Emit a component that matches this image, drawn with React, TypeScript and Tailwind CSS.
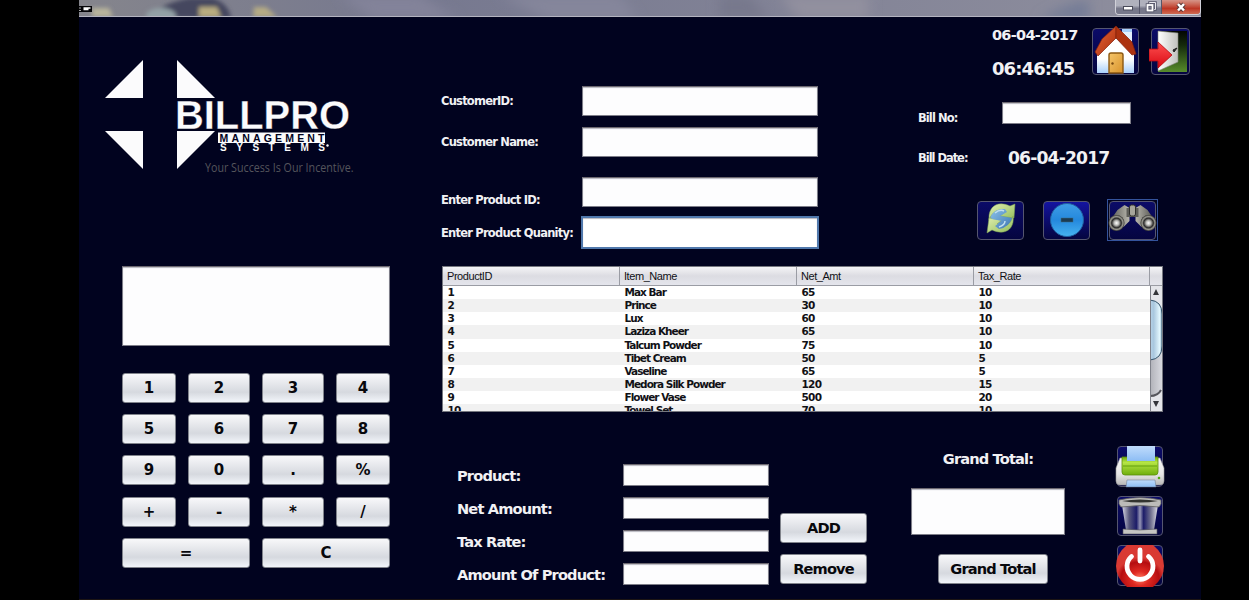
import type { ReactNode } from "react";

const field = "bg-[#fdfdfe] border border-[#7d7d88] border-t-[#6c6870] shadow-[inset_0_1px_1px_#b9b9c0]";
const key =
  "flex items-center justify-center rounded-[3px] border border-[#80838b] bg-linear-to-b from-[#f8f8fa] via-[#d6d9df] via-65% to-[#f2f5fa] text-[#08080c] font-bold leading-none pt-px";
const iconBox = "flex items-center justify-center rounded-[4px] border border-[#55566f] bg-linear-to-b from-[#0b0b68] to-[#050540]";

const keys = ["1", "2", "3", "4", "5", "6", "7", "8", "9", "0", ".", "%", "+", "-", "*", "/"];

const rows = [
  ["1", "Max Bar", "65", "10"],
  ["2", "Prince", "30", "10"],
  ["3", "Lux", "60", "10"],
  ["4", "Laziza Kheer", "65", "10"],
  ["5", "Talcum Powder", "75", "10"],
  ["6", "Tibet Cream", "50", "5"],
  ["7", "Vaseline", "65", "5"],
  ["8", "Medora Silk Powder", "120", "15"],
  ["9", "Flower Vase", "500", "20"],
  ["10", "Towel Set", "70", "10"],
];

function TitleBar() {
  return (
    <div className="flex h-[17px] justify-between overflow-hidden border-b border-[#b4b4c0] bg-linear-to-r from-[#85858c] via-[#76788f] via-30% to-[#8f8f9e]">
      <svg width="1030" height="16" viewBox="0 0 1030 16">
        <defs>
          <filter id="haze" x="-10%" y="-50%" width="120%" height="200%"><feGaussianBlur stdDeviation="2.200" /></filter>
          <filter id="soft" x="-10%" y="-50%" width="120%" height="200%"><feGaussianBlur stdDeviation="6" /></filter>
        </defs>
        <g filter="url(#soft)">
          <path d="M260 -5h80l40 25h-85z" fill="#83839a" />
          <path d="M420 -5h120l20 25H470z" fill="#85869b" />
          <path d="M640 -5h30l20 25h-50z" fill="#77788c" />
          <path d="M700 -5h90v25h-70z" fill="#92909f" />
          <path d="M960 20q20-14 50-20v20z" fill="#737c96" />
        </g>
        <g filter="url(#haze)">
          <path d="M70 18q10-14 40-20h24q16 6 18 20z" fill="#45465e" />
          <path d="M13 8h17l4 9H13z" fill="#b9b59c" />
          <ellipse cx="82" cy="16" rx="15" ry="8" fill="#93a1a6" />
          <path d="M120 7h18l4 10h-22z" fill="#b9ad80" />
          <path d="M175 7h12l11 10h-24z" fill="#b5ab84" />
        </g>
        <rect x="0" y="6" width="13" height="6" fill="#050508" />
        <path d="M1 7.500v1M1 10v1M4.500 8h7M4.500 9.500h5" stroke="#fff" strokeWidth="1.300" />
      </svg>
      <div className="flex h-[15px] w-[86px] shrink-0 overflow-hidden rounded-b-[4px] border border-t-0 border-[#d0d0d8]">
        <div className="flex w-[24px] items-center justify-center border-r border-[#55566a] bg-linear-to-b from-[#b0b1bd] from-40% to-[#77788a] to-60%">
          <svg width="12" height="12"><rect x="1.500" y="5.500" width="9" height="3.500" fill="#fff" stroke="#4a4b5a" /></svg>
        </div>
        <div className="flex w-[22px] items-center justify-center border-r border-[#55566a] bg-linear-to-b from-[#b0b1bd] from-40% to-[#77788a] to-60%">
          <svg width="12" height="12" fill="none"><path d="M4.500 4V1.500h6v7H9" stroke="#55566a" strokeWidth="2.500" /><path d="M4.500 4V1.500h6v7H9" stroke="#e8e8ee" strokeWidth="1" /><rect x="2.500" y="4" width="5" height="5.500" stroke="#55566a" strokeWidth="3.500" /><rect x="2.500" y="4" width="5" height="5.500" stroke="#fff" strokeWidth="1.800" /></svg>
        </div>
        <div className="flex flex-1 items-center justify-center bg-linear-to-b from-[#d59488] via-[#bd3524] via-60% to-[#cf6a52]">
          <svg width="12" height="12"><path d="M3 3l6 6.500M9 3L3 9.500" stroke="#5c3a3a" strokeWidth="4.500" /><path d="M3 3l6 6.500M9 3L3 9.500" stroke="#fff" strokeWidth="2.500" /></svg>
        </div>
      </div>
    </div>
  );
}

function Logo() {
  return (
    <svg className="block" width="256" height="120" viewBox="0 0 256 120" fill="#fbfbfc">
      <path d="M38 0v38H0zM72 0v38h38zM0 71h38v38zM72 71h38L72 109z" />
      <text x="70" y="69" fontFamily="Liberation Sans" fontWeight="700" fontSize="41" textLength="175" lengthAdjust="spacingAndGlyphs" stroke="#01031f" strokeWidth=".3">BILLPRO</text>
      <rect x="113" y="72.500" width="107" height="10.500" />
      <text x="114.500" y="81.500" fill="#02031f" fontFamily="Liberation Sans" fontWeight="700" fontSize="10.500" textLength="105">MANAGEMENT</text>
      <text x="115" y="91" fontFamily="Liberation Sans" fontWeight="700" fontSize="10" textLength="105">SYSTEMS</text>
      <circle cx="222.500" cy="85.500" r="1.200" />
      <text x="100" y="111.500" fill="#55555c" fontFamily="Open Sans" fontWeight="400" fontSize="12" textLength="148.500" lengthAdjust="spacingAndGlyphs">Your Success Is Our Incentive.</text>
    </svg>
  );
}

function HomeIcon() {
  return (
    <svg width="46" height="50" viewBox="0 0 46 50">
      <defs>
        <linearGradient id="wall" x2="0" y2="1"><stop stopColor="#fff" /><stop offset=".6" stopColor="#fff" /><stop offset="1" stopColor="#a9d0fb" /></linearGradient>
        <linearGradient id="roof" x2="1" y2="1"><stop stopColor="#e8683a" /><stop offset="1" stopColor="#a92c0c" /></linearGradient>
        <linearGradient id="wood" x2="1" y2="1"><stop stopColor="#f5c56a" /><stop offset="1" stopColor="#d8932c" /></linearGradient>
      </defs>
      <path d="M29 4h10v19l-10-8z" fill="#e4f0fd" /><path d="M29 4h10v3H29z" fill="#a8d0fa" />
      <path d="M23 13L41 29v19H4V29z" fill="url(#wall)" />
      <path d="M23 1L9 14 2 27l3 4 18-18z" fill="url(#roof)" stroke="#84200a" strokeWidth=".7" />
      <path d="M23 1l16 16 4 12-4 1-16-17z" fill="#ad3210" stroke="#84200a" strokeWidth=".7" />
      <path d="M16 48V30q0-2 2-2h10q2 0 2 2v18z" fill="url(#wood)" stroke="#8c5812" strokeWidth="1.400" />
      <circle cx="19.500" cy="38.500" r="1.200" fill="#7a4a10" />
    </svg>
  );
}

function ExitIcon() {
  return (
    <svg className="block" width="40" height="46" viewBox="0 0 40 46">
      <defs>
        <linearGradient id="out" x2="0" y2="1"><stop stopColor="#030603" /><stop offset=".35" stopColor="#152a0c" /><stop offset="1" stopColor="#578c2b" /></linearGradient>
        <linearGradient id="leaf" x2="1"><stop stopColor="#fff" /><stop offset="1" stopColor="#bfc1bd" /></linearGradient>
        <linearGradient id="arr" x2="0" y2="1"><stop stopColor="#ff5252" /><stop offset="1" stopColor="#d90812" /></linearGradient>
      </defs>
      <path d="M9 2h29v41H9z" fill="url(#out)" />
      <path d="M9 2l20 2v29L9 42z" fill="url(#leaf)" stroke="#83867e" strokeWidth=".6" />
      <path d="M24 21l4-2-3 4z" fill="#222" stroke="#222" />
      <path d="M0 20h9v-7l14 13L9 39v-7H0z" fill="url(#arr)" stroke="#b3060e" strokeWidth=".8" />
    </svg>
  );
}

function RefreshIcon() {
  return (
    <svg className="-mt-[4px]" width="34" height="34" viewBox="0 0 34 34">
      <defs><linearGradient id="gr" x2="1" y2="1"><stop stopColor="#e2efb0" /><stop offset="1" stopColor="#91bd5c" /></linearGradient>
      <linearGradient id="bl" x2="1" y2="1"><stop stopColor="#8bc1e8" /><stop offset="1" stopColor="#3f78b4" /></linearGradient></defs>
      <circle cx="17" cy="17" r="12" fill="url(#bl)" />
      <path d="M5 19C4 6 13-1 26 5l5-2-1 14-14-2 5-4C14 7 8 11 5 19z" fill="url(#gr)" stroke="#7ca24e" strokeWidth=".5" />
      <path d="M29 15C31 28 21 35 8 29l-5 3 2-15 13 2-5 4c8 5 14 0 16-8z" fill="url(#gr)" stroke="#7ca24e" strokeWidth=".5" />
      <path d="M7 15q4-8 14-7l2 3-7 4 11 2q-1 9-12 11l-4-3 7-5-10-2z" fill="url(#bl)" />
      <path d="M11 12q5-4 9-2M21 20q0 4-6 6" fill="none" stroke="#c4e0ee" strokeWidth="1.500" />
    </svg>
  );
}

function MinusIcon() {
  return (
    <svg width="36" height="36" viewBox="0 0 36 36">
      <defs><linearGradient id="disc" x2="0" y2="1"><stop stopColor="#3f9de5" /><stop offset=".5" stopColor="#2488dd" /><stop offset="1" stopColor="#46b3f0" /></linearGradient></defs>
      <circle cx="18" cy="18" r="16.500" fill="url(#disc)" stroke="#20609f" />
      <rect x="12" y="16" width="12" height="4" fill="#1b3b52" stroke="#3c6d85" strokeWidth=".5" />
    </svg>
  );
}

function BinocularsIcon() {
  return (
    <svg className="-mt-[5px] shrink-0" width="49" height="34" viewBox="0 0 48 34">
      <defs>
        <linearGradient id="tube" x2="1"><stop stopColor="#4d4d49" /><stop offset=".5" stopColor="#c9c7bc" /><stop offset="1" stopColor="#40403d" /></linearGradient>
        <radialGradient id="lens"><stop stopColor="#fff" /><stop offset=".3" stopColor="#b9b9b5" /><stop offset=".6" stopColor="#292928" /><stop offset=".8" stopColor="#9c9b93" /><stop offset="1" stopColor="#33332f" /></radialGradient>
      </defs>
      <path d="M9 9l7-5 5 3v13l-6 6L0 22zM39 9l-7-5-5 3v13l6 6 15-4z" fill="url(#tube)" />
      <path d="M18 7h12v9H18z" fill="#5d5d58" /><rect x="21" y="4" width="6" height="11" rx="2" fill="#a6a59b" stroke="#30302d" />
      <circle cx="8" cy="22" r="8" fill="url(#lens)" /><circle cx="40" cy="22" r="8" fill="url(#lens)" />
    </svg>
  );
}

function PrinterIcon() {
  return (
    <svg className="block" width="50" height="42" viewBox="0 0 50 42">
      <defs>
        <linearGradient id="case" x2="0" y2="1"><stop stopColor="#f8f8f8" /><stop offset=".6" stopColor="#e6e6e6" /><stop offset="1" stopColor="#b8b8b8" /></linearGradient>
        <linearGradient id="lid" x2="0" y2="1"><stop stopColor="#6ca60f" /><stop offset=".3" stopColor="#b6e645" /><stop offset="1" stopColor="#6fae0c" /></linearGradient>
        <linearGradient id="paper" x2="0" y2="1"><stop stopColor="#c0dcfc" /><stop offset="1" stopColor="#8dbdf4" /></linearGradient>
      </defs>
      <path d="M5 12h40l4 10v13q0 4-4 4H5q-4 0-4-4V22z" fill="url(#case)" stroke="#9a9a9a" strokeWidth=".6" />
      <path d="M7 11h36v15q0 3-3 3H10q-3 0-3-3z" fill="url(#lid)" stroke="#5a8e0b" strokeWidth=".8" />
      <path d="M8 20h34" stroke="#639f0c" /><rect x="12" y="0" width="28" height="15" fill="url(#paper)" />
      <circle cx="44" cy="32" r="1.300" fill="#55a915" />
      <path d="M12 34h28l1 7H11z" fill="url(#paper)" stroke="#6b7788" strokeWidth=".5" />
    </svg>
  );
}

function TrashIcon() {
  return (
    <svg className="block" width="44" height="38" viewBox="0 0 44 38">
      <defs><linearGradient id="glass" x2="1"><stop stopColor="#d9d9e6" /><stop offset=".2" stopColor="#56567c" /><stop offset=".4" stopColor="#1c1c68" /><stop offset=".5" stopColor="#9797b6" /><stop offset=".6" stopColor="#1c1c68" /><stop offset=".8" stopColor="#70708f" /><stop offset="1" stopColor="#dedee6" /></linearGradient></defs>
      <path d="M4 8h36l-4 25H8z" fill="url(#glass)" />
      <path d="M1 3q21-5 42 0v4l-2 3q-19-3-38 0L1 7z" fill="#bcbcb9" stroke="#62625f" strokeWidth=".8" />
      <path d="M4 4q18-3 36 0-18 3-36 0" fill="#32332f" />
      <path d="M5 32q17 2 34 0v5H5z" fill="#c5c5c3" stroke="#55555a" strokeWidth=".6" />
    </svg>
  );
}

function PowerIcon() {
  return (
    <svg className="block" width="50" height="42" viewBox="0 0 50 42">
      <defs><radialGradient id="red" cy=".8"><stop stopColor="#ff7b62" /><stop offset=".35" stopColor="#e02a22" /><stop offset=".8" stopColor="#b50d10" /><stop offset="1" stopColor="#d93a33" /></radialGradient></defs>
      <path d="M12 0h26q11 9 11 21T38 42H12Q1 33 1 21T12 0z" fill="url(#red)" />
      <path d="M16.500 11.500a13 13 0 1 0 17 0M25 5v11" stroke="#fff" strokeWidth="4.800" strokeLinecap="round" fill="none" />
    </svg>
  );
}

function FormRow({ label, className, input }: { label: ReactNode; className: string; input: string }) {
  return (
    <div className={`flex justify-between ${className}`}>
      <span className="text-[11.500px] leading-[14px] tracking-[-0.068em]">{label}</span>
      <div className={`shrink-0 ${input}`} />
    </div>
  );
}

function Calculator() {
  return (
    <div className="ml-[43px] w-[268px]">
      <div className={`h-[80px] ${field}`} />
      <div className="mt-[27px] grid grid-cols-[54px_62px_62px_54px] gap-x-3 gap-y-[11.200px] text-[15px]">
        {keys.map((k) => (
          <div key={k} className={`h-[30px] ${key}`}>{k}</div>
        ))}
        <div className={`col-span-2 h-[30px] ${key}`}>=</div>
        <div className={`col-span-2 h-[30px] ${key}`}>C</div>
      </div>
    </div>
  );
}

function ProductTable() {
  const cols = "grid grid-cols-[177px_177px_177px_176px]";
  return (
    <div className="flex h-[146px] w-[721px] flex-col overflow-hidden border border-[#75777f] bg-white text-[#111116]">
      <div className="flex h-[19px] shrink-0 border-b border-[#9a9ca4] bg-linear-to-b from-[#f4f4f6] via-[#dcdce2] to-[#e4e5ec] font-['Liberation_Sans'] text-[11px] font-normal leading-[19px] tracking-[-0.04em]">
        <div className={cols}>
          {["ProductID", "Item_Name", "Net_Amt", "Tax_Rate"].map((h) => (
            <div key={h} className="border-r border-[#9a9ca4] pl-1">{h}</div>
          ))}
        </div>
      </div>
      <div className="flex min-h-0 flex-1">
        <div className="w-[707px] overflow-hidden text-[10.500px] leading-[13.150px]">
          {rows.map((r) => (
            <div key={r[0]} className={`${cols} h-[13.150px] even:bg-[#f1f1f1]`}>
              {r.map((c, i) => (
                <span key={i} className={`pl-[4.500px] ${i === 1 ? "tracking-[-0.094em]" : "tracking-[-0.07em]"}`}>{c}</span>
              ))}
            </div>
          ))}
        </div>
        <svg width="12" height="125" viewBox="0 0 12 125">
          <defs>
            <linearGradient id="track" x2="1"><stop stopColor="#b0b1b8" /><stop offset="1" stopColor="#d8d9df" /></linearGradient>
            <linearGradient id="thumb" x2="1"><stop stopColor="#b7d3e8" /><stop offset=".3" stopColor="#a9c7de" /><stop offset=".8" stopColor="#e2f6fd" /><stop offset="1" stopColor="#9cbdd0" /></linearGradient>
          </defs>
          <rect width="12" height="125" fill="url(#track)" />
          <path d="M0 0h12v26Q12 15 0 14zM0 110q8 0 12-8v23H0z" fill="#e4e5ea" />
          <path d="M0 110q8 0 11-6" stroke="#55555c" strokeWidth="2" fill="none" />
          <path d="M0 14Q12 15 12 28v32q0 13-12 14z" fill="url(#thumb)" stroke="#34536a" />
          <path d="M3 9l3-6 3 6zM3 115h6l-3 6z" fill="#33343a" />
          <path d="M.5 0v125" stroke="#80828b" />
        </svg>
      </div>
    </div>
  );
}

function BillPanel() {
  return (
    <div className="ml-[100px] w-[284px] shrink-0">
      <div className="flex h-[64px] pl-[74px] pt-[11px]">
        <div className="w-[100px] shrink-0 leading-none">
          <div className="text-[14.500px] leading-[15px] tracking-[-0.05em]">06-04-2017</div>
          <div className="mt-[16px] text-[18px] leading-[20px] tracking-[-0.05em]">06:46:45</div>
        </div>
        <div className={`h-[47px] w-[47px] shrink-0 ${iconBox}`}><div className="-mt-[4px]"><HomeIcon /></div></div>
        <div className={`ml-[12px] h-[47px] w-[39px] shrink-0 ${iconBox}`}><div className="-ml-[3px] shrink-0"><ExitIcon /></div></div>
      </div>
      <div className="mt-[20px] flex h-[24px] text-[11.500px] leading-[14px] tracking-[-0.08em]">
        <span className="w-[84px] pt-[10px]">Bill No:</span>
        <div className={`mt-px h-[22px] w-[129px] ${field}`} />
      </div>
      <div className="mt-[23px] flex h-[20px] items-center">
        <span className="w-[90px] pt-[2px] text-[11.500px] tracking-[-0.09em]">Bill Date:</span>
        <span className="text-[17.200px] leading-[20px] tracking-[-0.05em]">06-04-2017</span>
      </div>
      <div className="mt-[31px] flex h-[42px] items-center pl-[59px]">
        <div className={`h-[39px] w-[47px] ${iconBox}`}><RefreshIcon /></div>
        <div className={`ml-[19px] h-[39px] w-[47px] ${iconBox} from-[#1414a0] to-[#0d0d7c]`}><MinusIcon /></div>
        <div className="ml-[17px] flex h-[42px] w-[51px] items-center justify-center border border-[#34539c]">
          <div className={`h-[39px] w-[47px] ${iconBox}`}><BinocularsIcon /></div>
        </div>
      </div>
    </div>
  );
}

function Totals() {
  return (
    <div className="flex h-[144px] pl-[16px] text-[14.600px] tracking-[-0.058em]">
      <div className="flex w-[312px] flex-col gap-[11px] pt-[19px]">
        {["Product:", "Net Amount:", "Tax Rate:", "Amount Of Product:"].map((l) => (
          <div key={l} className="flex h-[22px] items-center justify-between">
            <span className="pt-px">{l}</span>
            <div className={`h-[22px] w-[146px] ${field}`} />
          </div>
        ))}
      </div>
      <div className="ml-[11px] flex w-[87px] flex-col gap-[11px] pt-[68px]">
        <div className={`h-[30px] ${key}`}>ADD</div>
        <div className={`h-[30px] ${key}`}>Remove</div>
      </div>
      <div className="ml-[44px] flex w-[154px] flex-col items-center pt-[5px]">
        <span className="leading-[18px]">Grand Total:</span>
        <div className={`mt-[20px] h-[47px] w-full ${field}`} />
        <div className={`mt-[19px] ml-[10px] h-[30px] w-[110px] ${key}`}>Grand Total</div>
      </div>
      <div className="ml-[52px] flex w-[46px] flex-col gap-[9px] pt-px">
        <div className={`h-[41px] w-[46px] ${iconBox}`}><div className="-mx-[3px] shrink-0"><PrinterIcon /></div></div>
        <div className={`h-[40px] w-[46px] ${iconBox}`}><TrashIcon /></div>
        <div className={`h-[41px] w-[46px] ${iconBox}`}><div className="-mx-[3px] shrink-0"><PowerIcon /></div></div>
      </div>
    </div>
  );
}

export default function App() {
  return (
    <div className="flex h-[600px] w-[1249px] overflow-hidden bg-black pl-[79px] pr-[48px] font-['DejaVu_Sans',sans-serif] font-bold text-[#f1f1f4]">
      <div className="flex w-[1122px] flex-col border-b border-[#1c1514] bg-[#01031f]">
        <TitleBar />
        <div className="flex min-h-0 flex-1 whitespace-nowrap">
          <div className="w-[362px] shrink-0 pt-[43px]">
            <div className="ml-[26px] h-[206px]"><Logo /></div>
            <Calculator />
          </div>
          <div className="w-[760px]">
            <div className="flex h-[249px]">
              <div className="w-[377px] shrink-0 pt-[69px]">
                <FormRow label="CustomerID:" className="h-[41px] [&>span]:pt-[8px]" input={`h-[30px] w-[236px] ${field}`} />
                <FormRow label="Customer Name:" className="h-[50px] [&>span]:pt-[8px]" input={`h-[30px] w-[236px] ${field}`} />
                <FormRow label="Enter Product ID:" className="h-[39px] [&>span]:pt-[16px]" input={`h-[30px] w-[236px] ${field}`} />
                <FormRow label="Enter Product Quanity:" className="h-[33px] [&>span]:pt-[10px]" input="-mr-px h-[33px] w-[238px] border-2 border-[#5078ac] bg-white shadow-[inset_0_1px_1px_#b9b9c0]" />
              </div>
              <BillPanel />
            </div>
            <div className="ml-px"><ProductTable /></div>
            <div className="pt-[33px]"><Totals /></div>
          </div>
        </div>
      </div>
    </div>
  );
}
